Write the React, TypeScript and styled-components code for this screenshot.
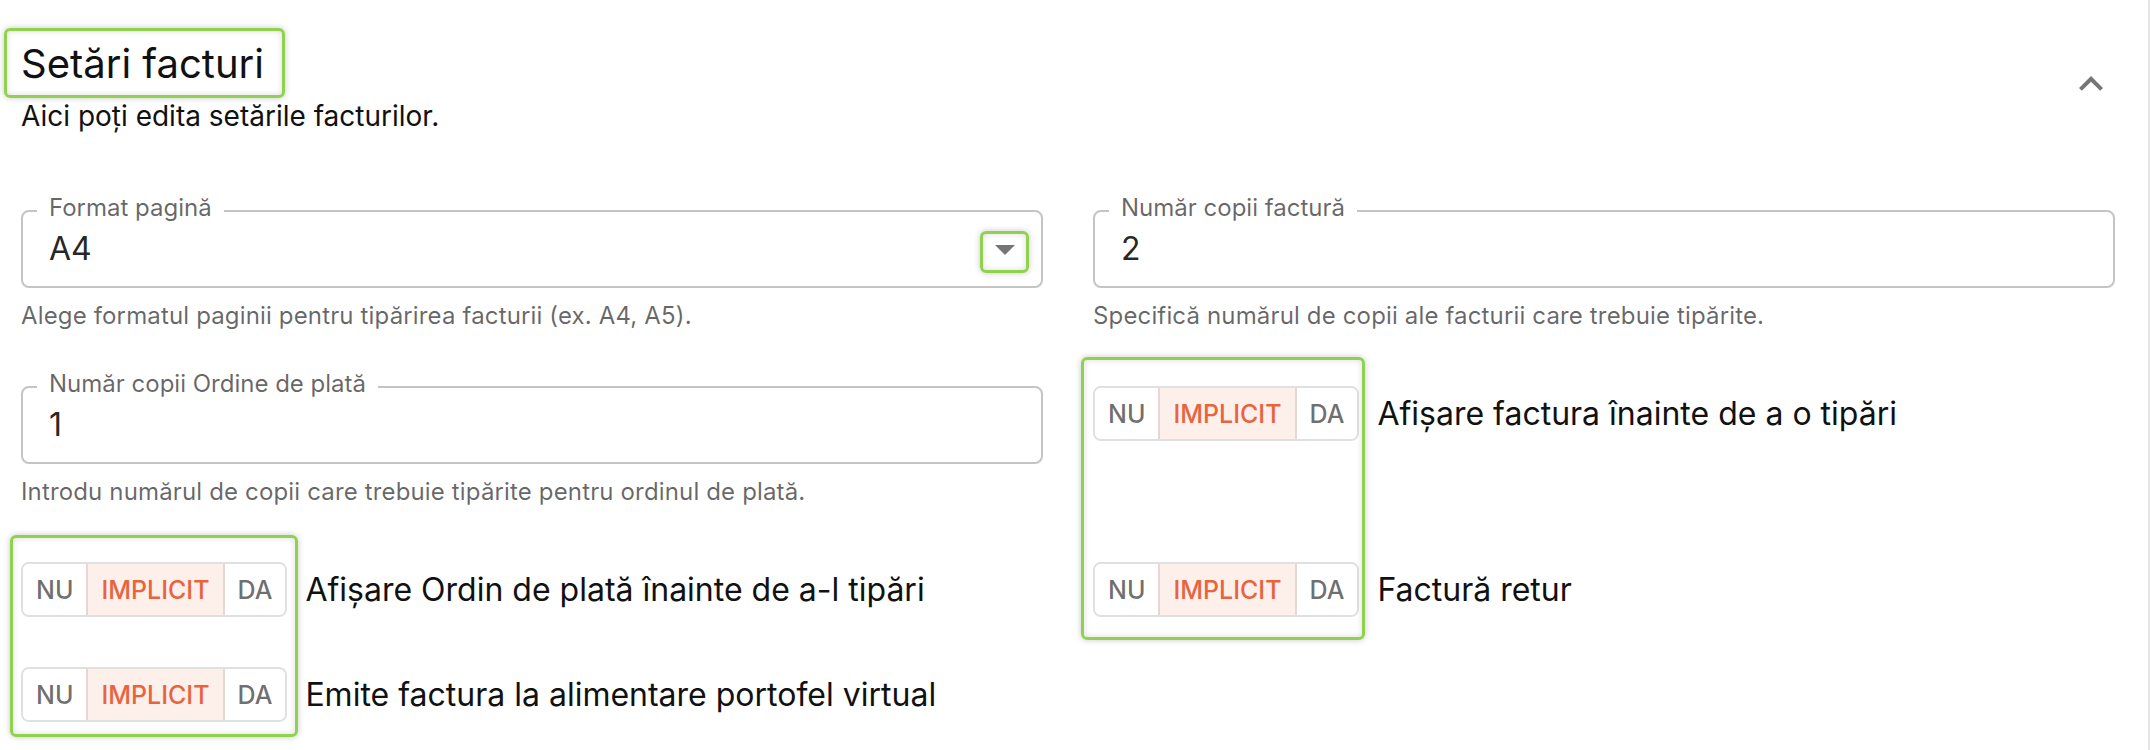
import React from "react";
import styled, { createGlobalStyle } from "styled-components";

const GlobalStyle = createGlobalStyle`
  * {
    box-sizing: border-box;
  }
  html,
  body {
    margin: 0;
    padding: 0;
    background: #fff;
  }
  body {
    font-family: Inter, "Noto Sans", "DejaVu Sans", sans-serif;
    color: rgba(0, 0, 0, 0.87);
  }
`;

const Page = styled.div`
  position: relative;
  width: 2150px;
  height: 750px;
  padding: 32px 33px 0 21px;
  border-right: 2px solid #e4e4e4;
  overflow: hidden;
`;

const Header = styled.header`
  display: flex;
  align-items: center;
  justify-content: space-between;
`;

const HeaderText = styled.div`
  display: flex;
  flex-direction: column;
  align-items: flex-start;
`;

const Title = styled.h2`
  position: relative;
  margin: 0;
  font-size: 40px;
  line-height: 64px;
  font-weight: 400;
  color: #111;
`;

const Subtitle = styled.p`
  margin: 0;
  font-size: 28px;
  line-height: 40px;
  color: #111;
`;

// green annotation frame drawn over the screenshot
const Mark = styled.span`
  position: absolute;
  border: 3px solid #8ed24e;
  border-radius: 6px;
  box-shadow: 0 0 6px rgba(0, 0, 0, 0.22), inset 0 0 6px rgba(0, 0, 0, 0.14);
  pointer-events: none;
`;

const TitleMark = styled(Mark)`
  top: -4px;
  bottom: -2px;
  left: -17px;
  right: -21px;
`;

const ArrowMark = styled(Mark)`
  top: 6px;
  bottom: 0;
  left: -1px;
  right: 0;
`;

const ColumnMark = styled(Mark)`
  z-index: 2;
`;

const IconButton = styled.button`
  display: flex;
  align-items: center;
  justify-content: center;
  width: 48px;
  height: 48px;
  padding: 0;
  border: 0;
  background: none;
  color: rgba(0, 0, 0, 0.54);
  cursor: pointer;
`;

const Grid = styled.div`
  position: relative;
  display: grid;
  grid-template-columns: 1fr 1fr;
  column-gap: 50px;
  row-gap: 50px;
  align-items: start;
  margin-top: 74px;
`;

const Field = styled.div`
  display: flex;
  flex-direction: column;
`;

const Outline = styled.div`
  position: relative;
  display: flex;
  align-items: center;
  height: 78px;
  padding: 0 12px 0 26px;
  border: 2px solid #c4c4c4;
  border-radius: 8px;
`;

const FloatLabel = styled.span`
  position: absolute;
  top: -18px;
  left: 14px;
  padding: 0 12px;
  background: #fff;
  font-size: 24px;
  line-height: 28px;
  color: rgba(0, 0, 0, 0.6);
  white-space: nowrap;
`;

const Value = styled.span`
  flex: 1;
  font-size: 32px;
  line-height: 46px;
  color: rgba(0, 0, 0, 0.87);
`;

const SelectIcon = styled.span`
  position: relative;
  display: flex;
  width: 48px;
  height: 48px;
  color: rgba(0, 0, 0, 0.54);
`;

const Helper = styled.p`
  margin: 8px 0 0;
  font-size: 24px;
  line-height: 40px;
  letter-spacing: 0.15px;
  color: rgba(0, 0, 0, 0.6);
`;

const ToggleRow = styled.div`
  display: flex;
  align-items: center;
  gap: 18px;
`;

const ToggleGroup = styled.div`
  display: inline-flex;
  height: 55px;
  border: 2px solid #e0e0e0;
  border-radius: 8px;
  overflow: hidden;
`;

const ToggleOption = styled.span<{ $selected?: boolean }>`
  display: flex;
  align-items: center;
  padding: 0 13px;
  font-size: 25px;
  font-weight: 500;
  color: ${p => (p.$selected ? "#e8643f" : "rgba(0, 0, 0, 0.58)")};
  background: ${p => (p.$selected ? "#fdefea" : "#fff")};

  & + & {
    border-left: 2px solid ${p => (p.$selected ? "#e3d8d5" : "#e0e0e0")};
  }
  & + &[data-after-selected="true"] {
    border-left-color: #e3d8d5;
  }
`;

const ToggleLabel = styled.span`
  font-size: 32px;
  line-height: 48px;
  color: #111;
  white-space: nowrap;
`;

interface TextFieldProps {
  label: string;
  value: string;
  helper: string;
  select?: boolean;
}

function TextField({ label, value, helper, select }: TextFieldProps) {
  return (
    <Field>
      <Outline>
        <FloatLabel>{label}</FloatLabel>
        <Value>{value}</Value>
        {select && (
          <SelectIcon>
            <svg viewBox="0 0 24 24" width="48" height="48" fill="currentColor">
              <path d="M7 10l5 5 5-5z" />
            </svg>
            <ArrowMark />
          </SelectIcon>
        )}
      </Outline>
      <Helper>{helper}</Helper>
    </Field>
  );
}

function TriToggle({ label }: { label: string }) {
  return (
    <ToggleRow>
      <ToggleGroup>
        <ToggleOption>NU</ToggleOption>
        <ToggleOption $selected>IMPLICIT</ToggleOption>
        <ToggleOption data-after-selected="true">DA</ToggleOption>
      </ToggleGroup>
      <ToggleLabel>{label}</ToggleLabel>
    </ToggleRow>
  );
}

export default function App() {
  return (
    <>
      <GlobalStyle />
      <Page>
        <Header>
          <HeaderText>
            <Title>
              Setări facturi
              <TitleMark />
            </Title>
            <Subtitle>Aici poți edita setările facturilor.</Subtitle>
          </HeaderText>
          <IconButton aria-label="Restrânge">
            <svg viewBox="0 0 24 24" width="48" height="48" fill="currentColor">
              <path d="M12 8l-6 6 1.41 1.41L12 10.83l4.59 4.58L18 14z" />
            </svg>
          </IconButton>
        </Header>

        <Grid>
          <TextField
            select
            label="Format pagină"
            value="A4"
            helper="Alege formatul paginii pentru tipărirea facturii (ex. A4, A5)."
          />
          <TextField
            label="Număr copii factură"
            value="2"
            helper="Specifică numărul de copii ale facturii care trebuie tipărite."
          />
          <TextField
            label="Număr copii Ordine de plată"
            value="1"
            helper="Introdu numărul de copii care trebuie tipărite pentru ordinul de plată."
          />
          <TriToggle label="Afișare factura înainte de a o tipări" />
          <TriToggle label="Afișare Ordin de plată înainte de a-l tipări" />
          <TriToggle label="Factură retur" />
          <TriToggle label="Emite factura la alimentare portofel virtual" />

          <ColumnMark style={{ left: -11, top: 325, width: 288, height: 202 }} />
          <ColumnMark style={{ left: 1060, top: 147, width: 284, height: 283 }} />
        </Grid>
      </Page>
    </>
  );
}
